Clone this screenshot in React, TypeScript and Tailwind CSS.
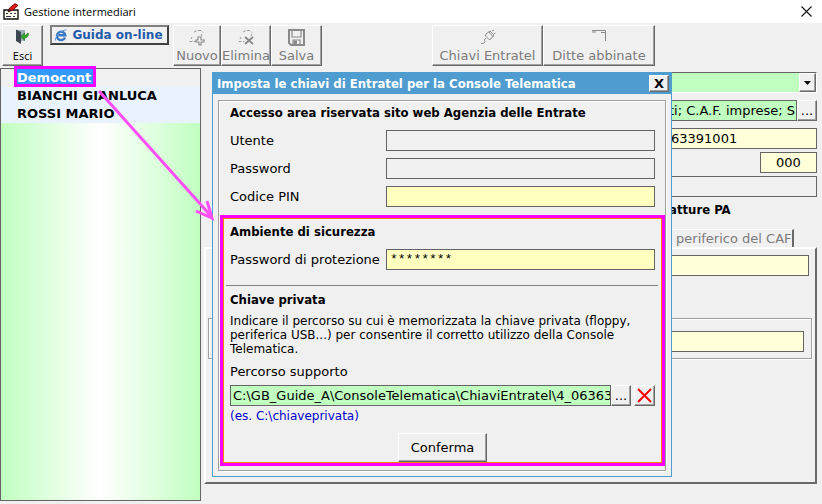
import React from 'react';
import clsx from 'clsx';

const bevel = 'border border-t-white border-l-white border-r-[#696969] border-b-[#696969] shadow-[inset_-1px_-1px_0_#a0a0a0] bg-[#f0f0f0]';
const field = 'block h-[21px] min-w-0 border border-[#646464] text-[13px] leading-4 outline-none';
const heading = 'font-["DejaVu_Sans_Condensed","DejaVu_Sans",sans-serif] text-[13px] leading-[18px] font-bold';

const clients = ['Democont', 'BIANCHI GIANLUCA', 'ROSSI MARIO'];

const ToolButton: React.FC<{ label: string; className: string; children: React.ReactNode }> = ({ label, className, children }) => (
    <button disabled className={clsx(bevel, 'flex h-[41px] flex-col items-center justify-between pt-[3px] text-[13px] leading-[18px] text-[#7b7b7b]', className)}>
        {children}
        {label}
    </button>
);

const TitleBar = () => (
    <header className="flex h-[23px] items-center bg-white pl-[3px] pr-[10px]">
        <svg width="17" height="17" viewBox="0 0 17 17" aria-hidden="true">
            <path d="M1 7h14v9H1z" fill="#fffff0" stroke="#111" strokeWidth="1.4" />
            <path d="M3 10.500h2M7 10.500h2M11 10.500h2M3 13.500h5M10 13.500h2" stroke="#335" strokeWidth="1.2" />
            <path d="M5 9l1.500-4L12 0.600l3 1.800L10 7z" fill="#e01818" stroke="#600" strokeWidth="0.800" />
            <path d="M5 9l1-3 2.500 1.600z" fill="#222" />
        </svg>
        <h1 className="ml-1 flex-1 font-['Open_Sans',sans-serif] text-[11px] leading-4">Gestione intermediari</h1>
        <button aria-label="Chiudi" className="p-0">
            <svg width="11" height="11" viewBox="0 0 11 11">
                <path d="M0.500 0.500l10 10M10.500 0.500l-10 10" stroke="#111" strokeWidth="1.1" />
            </svg>
        </button>
    </header>
);

const Toolbar = () => (
    <div className="flex items-start pt-[2px] pl-[2px]">
        <button className={clsx(bevel, 'flex h-[41px] w-[41px] flex-col items-center justify-between pt-[3px] font-["Open_Sans",sans-serif] text-[11px] leading-[18px]')}>
            <svg width="15" height="15" viewBox="0 0 15 15" aria-hidden="true">
                <path d="M1 1h9v11H1z" fill="#9fb0bd" />
                <path d="M1 0.500l5 2.500v12L1 12z" fill="#3c4650" />
                <path d="M13.500 4.500c0 3-1.500 4.500-4 4.500v2.500L5.500 7.500l4-3.500v2.200c1.500 0 2.500-.7 2.800-2.200z" fill="#35a52c" stroke="#1d6b18" strokeWidth="0.500" />
            </svg>
            Esci
        </button>
        <button className="ml-[7px] flex h-5 w-[119px] items-center border-2 border-t-[#808080] border-l-[#808080] border-r-[#404040] border-b-[#404040] bg-[#f0f0f0] pl-[2px] text-[12px] leading-4 font-bold text-[#1f5bab]">
            <svg width="14" height="14" viewBox="0 0 14 14" aria-hidden="true">
                <path d="M11 9.600A4.200 4.200 0 1 1 11.300 7.300H4.500" fill="none" stroke="#3a78c4" strokeWidth="2.400" />
                <path d="M1.500 12.500C0.500 9 7 2 12.500 1.800" fill="none" stroke="#5b9be0" />
            </svg>
            <span className="flex-1">Guida on-line</span>
        </button>
        <ToolButton label="Nuovo" className="ml-1 w-12">
            <svg width="18" height="17" viewBox="0 0 18 17" fill="none" stroke="#9a9a9a" aria-hidden="true">
                <path d="M6 3l3-1.500h4l2 2M1.500 12.500h7M4 8l-1 2M14 5l-1 2" strokeDasharray="3 1.500" />
                <path d="M10 8h3v3h3v2h-3v3h-2v-3H8v-2h2z" fill="#fff" stroke="#888" strokeWidth="1.200" />
            </svg>
        </ToolButton>
        <ToolButton label="Elimina" className="w-[50px]">
            <svg width="18" height="17" viewBox="0 0 18 17" fill="none" stroke="#9a9a9a" aria-hidden="true">
                <path d="M6 3l3-1.500h4l2 2M1.500 12.500h6M4 8l-1 2M15 5l-1 2" strokeDasharray="3 1.500" />
                <path d="M8 8l8 7M16 8l-8 7" stroke="#888" strokeWidth="1.800" />
            </svg>
        </ToolButton>
        <ToolButton label="Salva" className="w-[51px]">
            <svg width="17" height="17" viewBox="0 0 17 17" fill="none" stroke="#8a8a8a" aria-hidden="true">
                <path d="M1 1h15v15H3l-2-2z" strokeWidth="2" />
                <path d="M4 1v7h9V1M5 16v-5h7v5" strokeWidth="1.200" />
                <path d="M6 12h2.500v3H6z" fill="#8a8a8a" />
            </svg>
        </ToolButton>
        <ToolButton label="Chiavi Entratel" className="ml-[110px] w-[111px]">
            <svg width="16" height="17" viewBox="0 0 16 17" fill="none" stroke="#8a8a8a" aria-hidden="true">
                <path d="M6 5l4-3 4 4-3 4-2 .5L5.500 7zM9 3l4 5M12 2l2-1M14 5l1.500-1M6 9l-2 2c2 1 1 4-3 3.500" />
            </svg>
        </ToolButton>
        <ToolButton label="Ditte abbinate" className="w-28">
            <svg width="14" height="17" viewBox="0 0 14 17" fill="none" stroke="#8a8a8a" aria-hidden="true">
                <path d="M0 1.500h13.500V12" />
                <path d="M0 3h4M9 3.500h4" strokeWidth="1.200" />
            </svg>
        </ToolButton>
    </div>
);

const ClientList = () => (
    <ul className="w-[201px] shrink-0 border border-[#646464] bg-linear-to-r from-[#c0ffc0] via-white to-[#c0ffc0] text-[13px] leading-[18px] font-bold">
        {clients.map((name, i) => (
            <li key={name} className={clsx('h-[18px] pl-4', i === 0 ? 'bg-[#f0f0f0]' : 'bg-[#e8f3ff]')}>
                {i === 0 ? (
                    <span className="block h-[15px] w-fit bg-[#3399ff] pr-[2px] leading-[17px] text-white ring-3 ring-[#f0f]">{name}</span>
                ) : name}
            </li>
        ))}
    </ul>
);

const DetailForm = () => (
    <form className="flex h-full flex-col pt-1">
        <div className="mb-[7px] ml-[440px] flex h-[21px] border border-t-[#646464] border-r-white border-b-white border-l-[#646464] bg-[#c0ffc0]">
            <select aria-label="Tipo intermediario" className="w-full appearance-none bg-[#c0ffc0] px-1 text-[13px] outline-none">
                <option></option>
            </select>
            <span className={clsx(bevel, 'flex w-[17px] shrink-0 items-center justify-center')}>
                <svg width="7" height="4" viewBox="0 0 7 4"><path d="M0 0h7L3.500 4z" /></svg>
            </span>
        </div>
        <div className="mb-[7px] ml-[440px] flex h-[21px]">
            <input aria-label="Categoria" className={clsx(field, 'flex-1 bg-[#c0ffc0] pl-6')} defaultValue="ti; C.A.F. imprese; S" />
            <button type="button" aria-label="Scegli categoria" className={clsx(bevel, 'w-5 text-[13px] leading-4')}>...</button>
        </div>
        <input aria-label="Codice fiscale" className={clsx(field, 'mb-[3px] ml-[440px] bg-[#ffffd9] pl-[26px]')} defaultValue="63391001" />
        <input aria-label="Sede" className={clsx(field, 'mb-[3px] w-[57px] self-end bg-[#ffffd9] text-center')} defaultValue="000" />
        <input aria-label="Descrizione" className={clsx(field, 'ml-[440px] bg-[#f0f0f0]')} />
        <h2 className={clsx(heading, 'mt-1 pl-[465px]')}>atture PA</h2>
        <div className="mt-[10px] flex pl-[440px]">
            <button type="button" className="h-[18px] border-t border-r-2 border-t-white border-r-[#696969] pl-5 text-[13px] leading-[18px] text-[#7b7b7b]">o periferico del CAF</button>
        </div>
        <div className="mb-[17px] flex-1 border-2 border-t-white border-l-white border-r-[#696969] border-b-[#696969] pt-[6px] pr-[6px] pl-[2px]">
            <div className="pl-10">
                <input aria-label="Ufficio" className={clsx(field, 'w-full bg-[#ffffd9]')} />
            </div>
            <fieldset className="mt-[42px] -mr-[3px] border border-[#a0a0a0] pt-3 pr-[7px] pb-[6px] pl-10 shadow-[1px_1px_0_#fff,inset_1px_1px_0_#fff]">
                <input aria-label="Recapito" className={clsx(field, 'w-full bg-[#ffffd9]')} />
            </fieldset>
        </div>
    </form>
);

const KeysDialog = () => (
    <div role="dialog" aria-labelledby="keys-title" className="absolute top-1 left-2 w-[460px] border border-[#4f9dd0] bg-[#f0f0f0]">
        <div className="flex h-[21px] items-center bg-[#4f9dd0] pr-[2px] pl-1">
            <h2 id="keys-title" className={clsx(heading, 'flex-1 text-white')}>Imposta le chiavi di Entratel per la Console Telematica</h2>
            <button aria-label="Chiudi" className={clsx(bevel, 'h-[17px] w-5 text-[13px] leading-[15px] font-bold')}>X</button>
        </div>
        <form className="mx-[5px] mt-[6px] mb-[5px] border border-[#a0a0a0] pt-[3px] pb-1 shadow-[1px_1px_0_#fff,inset_1px_1px_0_#fff]">
            <div className="pr-[10px] pl-[11px]">
                <h3 className={heading}>Accesso area riservata sito web Agenzia delle Entrate</h3>
                <div className="mt-2 grid grid-cols-[156px_1fr] gap-y-[7px] text-[13px] leading-[21px]">
                    <label htmlFor="utente">Utente</label>
                    <input id="utente" className={clsx(field, 'bg-[#f0f0f0] px-1')} />
                    <label htmlFor="password">Password</label>
                    <input id="password" type="password" className={clsx(field, 'bg-[#f0f0f0] px-1')} />
                    <label htmlFor="pin">Codice PIN</label>
                    <input id="pin" className={clsx(field, 'bg-[#ffffc0] px-1')} />
                </div>
            </div>
            <div className="mt-2 ml-px border-[3px] border-[#f0f]">
                <div className="border border-[#ff8000] px-[6px] pt-1">
                    <h3 className={heading}>Ambiente di sicurezza</h3>
                    <div className="mt-2 grid grid-cols-[156px_1fr] text-[13px] leading-[21px]">
                        <label htmlFor="protezione">Password di protezione</label>
                        <input id="protezione" className={clsx(field, 'bg-[#ffffc0] px-[3px] font-["Liberation_Mono",monospace]')} defaultValue="********" />
                    </div>
                    <hr className="-mr-[3px] -ml-1 mt-[15px] border-[#808080]" />
                    <h3 className={clsx(heading, 'mt-[5px]')}>Chiave privata</h3>
                    <p className="mt-[5px] text-[12px] leading-[14px] whitespace-nowrap">
                        Indicare il percorso su cui è memorizzata la chiave privata (floppy,<br />
                        periferica USB...) per consentire il corretto utilizzo della Console<br />
                        Telematica.
                    </p>
                    <label htmlFor="percorso" className="mt-[7px] block text-[13px] leading-[18px]">Percorso supporto</label>
                    <div className="mt-1 flex">
                        <input id="percorso" className={clsx(field, 'flex-1 bg-[#c0ffc0] pl-[2px]')} defaultValue="C:\GB_Guide_A\ConsoleTelematica\ChiaviEntratel\4_06363" />
                        <button type="button" aria-label="Sfoglia" className={clsx(bevel, 'w-5 text-[13px] leading-4')}>...</button>
                        <button type="button" aria-label="Cancella percorso" className={clsx(bevel, 'ml-[3px] flex w-[21px] items-center justify-center')}>
                            <svg width="15" height="15" viewBox="0 0 15 15"><path d="M1 1l13 13M14 1L1 14" stroke="#f00" strokeWidth="2" /></svg>
                        </button>
                    </div>
                    <p className="mt-[2px] text-[12px] leading-4 text-[#0000c8]">(es. C:\chiaveprivata)</p>
                    <button type="button" className={clsx(bevel, 'mt-[9px] ml-[168px] block h-[29px] w-[89px] text-[13px]')}>Conferma</button>
                </div>
            </div>
        </form>
    </div>
);

const App: React.FC = () => {
    return (
        <div className="flex min-h-screen flex-col bg-[#f0f0f0] font-['DejaVu_Sans',sans-serif] text-black">
            <TitleBar />
            <Toolbar />
            <main className="relative mt-[2px] flex flex-1 pr-[5px] pb-[3px]">
                <ClientList />
                <section className="relative ml-[3px] min-w-0 flex-1">
                    <DetailForm />
                    <KeysDialog />
                </section>
                <svg className="pointer-events-none absolute top-[20px] left-[96px]" width="120" height="134" viewBox="0 0 120 134" fill="none" stroke="#ff4ff8" strokeWidth="3" aria-hidden="true">
                    <path d="M3 3L115 128M111 113l5 17-16-7" />
                </svg>
            </main>
        </div>
    );
};

export default App;
